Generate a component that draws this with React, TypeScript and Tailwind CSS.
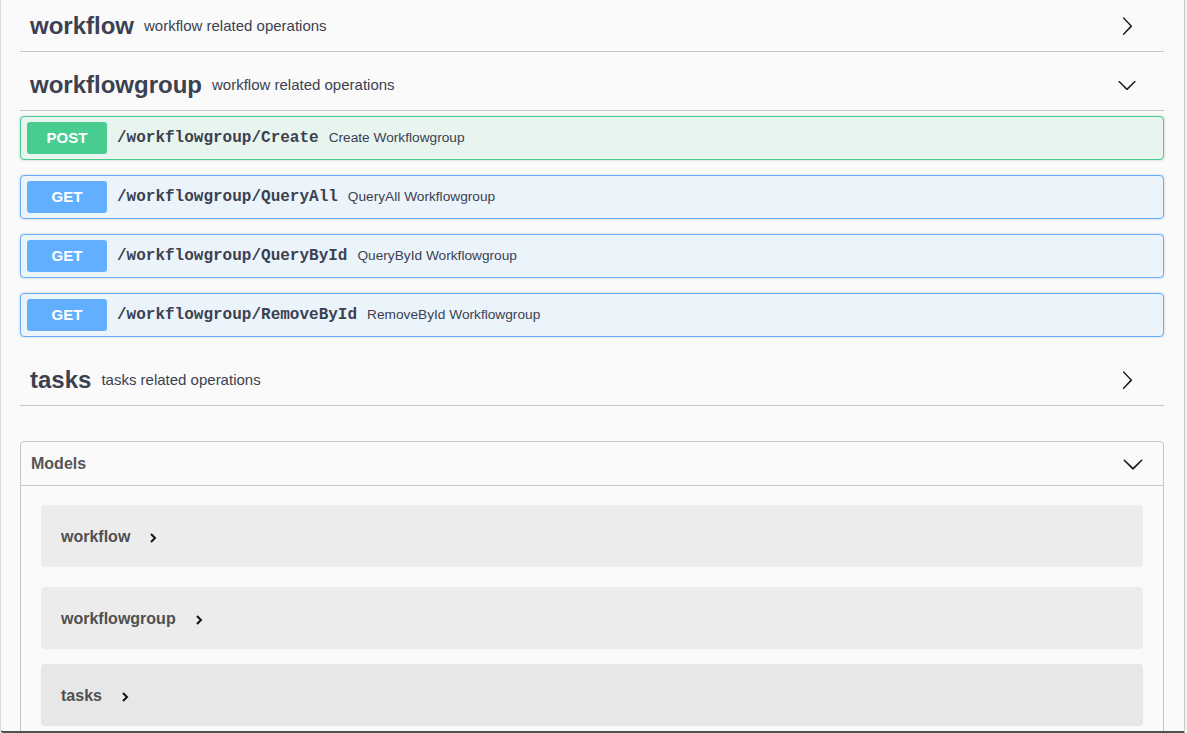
const sans = { fontFamily: '"Liberation Sans", Arial, sans-serif' };

function ArrowRight() {
  return (
    <svg width="20" height="20" viewBox="0 0 20 20" className="shrink-0">
      <path
        fill="#1a1a1a"
        d="M13.25 10L6.109 2.58a.697.697 0 0 1 0-.979.68.68 0 0 1 .969 0l7.83 8.135c.277.268.277.707 0 .984l-7.83 8.134a.68.68 0 0 1-.969 0 .697.697 0 0 1 0-.98L13.25 10z"
      />
    </svg>
  );
}

function ArrowDown({ size = 20 }: { size?: number }) {
  return (
    <svg width={size} height={size} viewBox="0 0 20 20" className="shrink-0">
      <path
        fill="#1a1a1a"
        d="M17.418 6.109c.272-.268.709-.268.979 0s.271.701 0 .969l-7.908 7.83c-.27.268-.707.268-.979 0l-7.908-7.83c-.27-.268-.27-.701 0-.969.271-.268.709-.268.979 0L10 13.25l7.418-7.141z"
      />
    </svg>
  );
}

function TagHeader({ name, desc, open }: { name: string; desc: string; open?: boolean }) {
  return (
    <div className="flex h-[52px] items-center border-b border-[#c4c6cb] pl-[10px]">
      <span className="text-[24px] font-bold text-[#3b4151]">{name}</span>
      <span className="ml-[10px] mt-[2px] flex-1 text-[15px] text-[#3b4151]">{desc}</span>
      <div className="mr-[27px]">{open ? <ArrowDown /> : <ArrowRight />}</div>
    </div>
  );
}

const ops = [
  { method: "POST", path: "/workflowgroup/Create", desc: "Create Workflowgroup" },
  { method: "GET", path: "/workflowgroup/QueryAll", desc: "QueryAll Workflowgroup" },
  { method: "GET", path: "/workflowgroup/QueryById", desc: "QueryById Workflowgroup" },
  { method: "GET", path: "/workflowgroup/RemoveById", desc: "RemoveById Workflowgroup" },
];

function OpBlock({ method, path, desc }: { method: string; path: string; desc: string }) {
  const post = method === "POST";
  return (
    <div
      className={
        post
          ? "mb-[15px] flex h-[44px] items-center rounded-[4px] border border-[#49cc90] bg-[#e8f5ef] px-[6px] shadow-[0_0_3px_rgba(0,0,0,0.19)]"
          : "mb-[15px] flex h-[44px] items-center rounded-[4px] border border-[#61affe] bg-[#ebf3fb] px-[6px] shadow-[0_0_3px_rgba(0,0,0,0.19)]"
      }
    >
      <div
        className={
          post
            ? "flex h-[32px] w-[80px] items-center justify-center rounded-[3px] bg-[#49cc90] text-[15px] font-bold text-white"
            : "flex h-[32px] w-[80px] items-center justify-center rounded-[3px] bg-[#61affe] text-[15px] font-bold text-white"
        }
      >
        {method}
      </div>
      <span
        className="ml-[10px] text-[16px] font-bold text-[#3b4151]"
        style={{ fontFamily: '"Liberation Mono", "Courier New", monospace' }}
      >
        {path}
      </span>
      <span className="ml-[10px] mt-[1px] text-[13.7px] text-[#3b4151]">{desc}</span>
    </div>
  );
}

function ModelRow({ name, className }: { name: string; className: string }) {
  return (
    <div className={"flex h-[62px] items-center rounded-[4px] px-[20px] pt-[2px] " + className}>
      <span className="text-[16px] font-bold text-[#505050]">{name}</span>
      <svg width="10" height="10" viewBox="0 0 10 10" className="ml-[18px] mt-[2px]">
        <polyline points="3,1 7,5 3,9" fill="none" stroke="#111" strokeWidth="2" />
      </svg>
    </div>
  );
}

export default function App() {
  return (
    <div className="h-[733px] w-[1187px] overflow-hidden bg-[#f4f4f4]" style={sans}>
      <div className="h-[733px] w-[1185px] overflow-hidden rounded-bl-[4px] border-b-2 border-l border-r border-b-[#505050] border-l-[#dcdcdc] border-r-[#c6c6c6] bg-[#fafafa] pl-[19px] pr-[20px]">
        <TagHeader name="workflow" desc="workflow related operations" />
        <div className="mt-[7px]">
          <TagHeader name="workflowgroup" desc="workflow related operations" open />
          <div className="mt-[5px]">
            {ops.map((o) => (
              <OpBlock key={o.path} {...o} />
            ))}
          </div>
        </div>
        <div className="mt-[17px]">
          <TagHeader name="tasks" desc="tasks related operations" />
        </div>
        <div className="mt-[35px] rounded-[4px] border border-[#c4c6cb]">
          <div className="flex h-[44px] items-center border-b border-[#c4c6cb] pl-[10px]">
            <span className="flex-1 text-[16px] font-bold text-[#555555]">Models</span>
            <div className="mr-[19px]">
              <ArrowDown size={22} />
            </div>
          </div>
          <div className="px-[20px] pt-[19px] pb-[20px]">
            <ModelRow name="workflow" className="bg-[#ececec]" />
            <div className="mt-[20px]">
              <ModelRow name="workflowgroup" className="bg-[#ececec]" />
            </div>
            <div className="mt-[15px]">
              <ModelRow name="tasks" className="bg-[#e7e7e7]" />
            </div>
          </div>
        </div>
      </div>
    </div>
  );
}
